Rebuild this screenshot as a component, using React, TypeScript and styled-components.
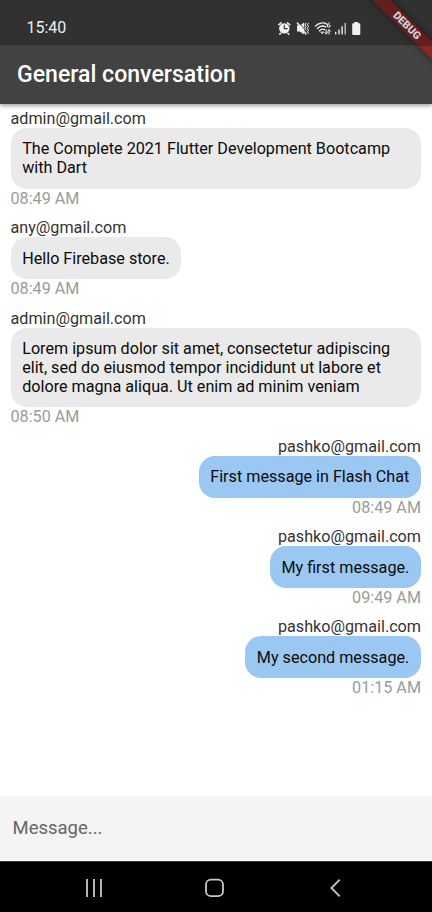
import React from 'react';
import styled, { createGlobalStyle } from 'styled-components';

const GlobalStyle = createGlobalStyle`
  *, *::before, *::after { box-sizing: border-box; }
  body { margin: 0; background: #fff; font-family: Roboto, "Liberation Sans", sans-serif; }
`;

const Screen = styled.div`
  position: relative;
  display: flex;
  flex-direction: column;
  width: 432px;
  height: 912px;
  overflow: hidden;
  background: #fff;
`;

const StatusBar = styled.header`
  flex: none;
  display: flex;
  align-items: center;
  justify-content: space-between;
  height: 45px;
  padding: 10px 70px 0 26.5px;
  background: #313131;
  color: #f0f0f0;
`;

const Clock = styled.span`
  font-size: 16px;
  line-height: 20px;
`;

const StatusIcons = styled.svg`
  display: block;
  width: 84px;
  height: 16px;
`;

const AppBar = styled.div`
  flex: none;
  display: flex;
  align-items: center;
  position: relative;
  height: 59px;
  padding: 1px 17px 0;
  background: #424242;
  box-shadow: 0 2px 4px rgba(0, 0, 0, 0.36);
`;

const Title = styled.h1`
  margin: 0;
  color: #fff;
  font-size: 23.08px;
  font-weight: 500;
  line-height: 28px;
`;

const DebugBanner = styled.div`
  position: absolute;
  top: 18.5px;
  right: -31px;
  width: 112px;
  height: 13px;
  transform: rotate(45deg);
  background: linear-gradient(135deg, #641e1e calc(50% + 20px), #842927 0);
  box-shadow: 0 0 6px rgba(0, 0, 0, 0.5);
  color: #d6d0d0;
  font-size: 10.7px;
  font-weight: 900;
  line-height: 13px;
  text-align: center;
`;

const MessageList = styled.main`
  flex: 1;
  display: flex;
  flex-direction: column;
  gap: 10.5px;
  padding: 5px 11px 0 10.5px;
`;

const MessageItem = styled.article<{ $own: boolean }>`
  display: flex;
  flex-direction: column;
  align-items: ${({ $own }) => ($own ? 'flex-end' : 'flex-start')};
  font-size: 16.17px;
  line-height: 19px;
`;

const Sender = styled.span`
  color: #333;
`;

const Bubble = styled.p<{ $own: boolean }>`
  margin: 0;
  padding: 11.4px 11.7px;
  border-radius: 16px;
  background: ${({ $own }) => ($own ? '#9bc7f3' : '#eaeaea')};
  color: #0b0b0b;
  white-space: pre;
`;

const Time = styled.time`
  color: #9b9b9b;
`;

const Composer = styled.div`
  flex: none;
  display: flex;
  align-items: center;
  height: 65px;
  border-radius: 4px 4px 0 0;
  background: #f4f4f4;
  border-bottom: 1px solid #fff;
`;

const MessageInput = styled.input`
  width: 100%;
  padding: 0 12.5px;
  border: 0;
  outline: 0;
  background: transparent;
  color: #222;
  font: 18.5px/22px Roboto, "Liberation Sans", sans-serif;
  &::placeholder { color: #666; opacity: 1; }
`;

const NavBar = styled.nav`
  flex: none;
  height: 51px;
  background: #000;
  border-top: 1px solid #333;
`;

const NavIcons = styled.svg`
  display: block;
  width: 432px;
  height: 50px;
`;

const messages = [
  { from: 'admin@gmail.com', text: 'The Complete 2021 Flutter Development Bootcamp\nwith Dart', time: '08:49 AM', wide: true },
  { from: 'any@gmail.com', text: 'Hello Firebase store.', time: '08:49 AM' },
  {
    from: 'admin@gmail.com',
    text: 'Lorem ipsum dolor sit amet, consectetur adipiscing\nelit, sed do eiusmod tempor incididunt ut labore et\ndolore magna aliqua. Ut enim ad minim veniam',
    time: '08:50 AM',
    wide: true,
  },
  { from: 'pashko@gmail.com', text: 'First message in Flash Chat', time: '08:49 AM', own: true },
  { from: 'pashko@gmail.com', text: 'My first message.', time: '09:49 AM', own: true },
  { from: 'pashko@gmail.com', text: 'My second message.', time: '01:15 AM', own: true },
];

const WideBubble = styled(Bubble)`
  align-self: stretch;
`;

export default function App() {
  return (
    <Screen>
      <GlobalStyle />
      <StatusBar>
        <Clock>15:40</Clock>
        <StatusIcons viewBox="278 19 84 16" fill="none" stroke="#f0f0f0" strokeLinecap="round">
          {/* alarm */}
          <circle cx="284.3" cy="27.4" r="5.2" fill="#f0f0f0" stroke="none" />
          <path d="M278.9 23.7l2.3-1.9M289.7 23.7l-2.3-1.9M280.7 32.2l-.9.9M287.9 32.2l.9.9" strokeWidth="1.5" />
          <path d="M284.3 24.3v3.3h2.9" stroke="#313131" strokeWidth="1.1" />
          {/* muted with vibration */}
          <path d="M297 24.6h2.6l4.6-3.2v12.2l-4.6-3.2H297z" fill="#f0f0f0" stroke="none" />
          <path d="M299.2 21.6l6.4 8" stroke="#313131" strokeWidth=".8" />
          <path d="M297.4 22l8.7 11" strokeWidth="1.5" />
          <path d="M306 22.3l-1 1.6 1.1 1.7-1.1 1.8 1.1 1.7M308.4 22.3l-1 1.6 1.1 1.7-1.1 1.8 1.1 1.7-1.1 1.8 1 1.5" strokeWidth="1" />
          {/* wifi 6 */}
          <path d="M315.3 25.1c3.3-3.4 8.3-4 11.6-2M317.3 27.5c2.3-2.4 5.8-3 8.4-1.6M319.5 29.7c1.5-1.5 3.5-1.9 5-1" strokeWidth="1.35" />
          <path d="M320.8 31.2l1.4 1.6 1.5-1.6z" fill="#f0f0f0" strokeWidth=".6" />
          <path d="M329.3 21.9c-1.4.2-1.9 1.3-1.9 2.9" strokeWidth="1" />
          <circle cx="328.6" cy="25" r="1.3" strokeWidth="1" />
          <path d="M326.2 28.8v4.1M324.9 31.6l1.3 1.4 1.3-1.4M329 33v-4.1M327.7 30.2l1.3-1.4 1.3 1.4" strokeWidth="1" />
          {/* signal */}
          <path d="M335.7 31.5v1.4M339 29v3.9M342.1 25.7v7.2" strokeWidth="1.4" />
          <path d="M345.2 22.5v10.4" strokeWidth="1.3" stroke="#ccc" />
          {/* battery */}
          <path d="M352.2 23.2q0-.9.9-.9h1.2v-1.2h3.9v1.2h1.2q.9 0 .9.9v9.5q0 1.2-1.2 1.2h-5.7q-1.2 0-1.2-1.2z" fill="#f0f0f0" stroke="none" />
        </StatusIcons>
      </StatusBar>
      <AppBar>
        <Title>General conversation</Title>
      </AppBar>
      <MessageList>
        {messages.map((m, i) => {
          const Body = m.wide ? WideBubble : Bubble;
          return (
            <MessageItem key={i} $own={!!m.own}>
              <Sender>{m.from}</Sender>
              <Body $own={!!m.own}>{m.text}</Body>
              <Time>{m.time}</Time>
            </MessageItem>
          );
        })}
      </MessageList>
      <Composer>
        <MessageInput placeholder="Message..." />
      </Composer>
      <NavBar>
        <NavIcons viewBox="0 862 432 50" fill="none" stroke="#c9c9c9" strokeWidth="1.8">
          <path d="M87 879v18M94 879v18M101 879v18" />
          <rect x="206" y="879.6" width="17" height="16.6" rx="5" />
          <path d="M339.7 879.7l-8.3 8.3 8.3 8.3" />
        </NavIcons>
      </NavBar>
      <DebugBanner>DEBUG</DebugBanner>
    </Screen>
  );
}
